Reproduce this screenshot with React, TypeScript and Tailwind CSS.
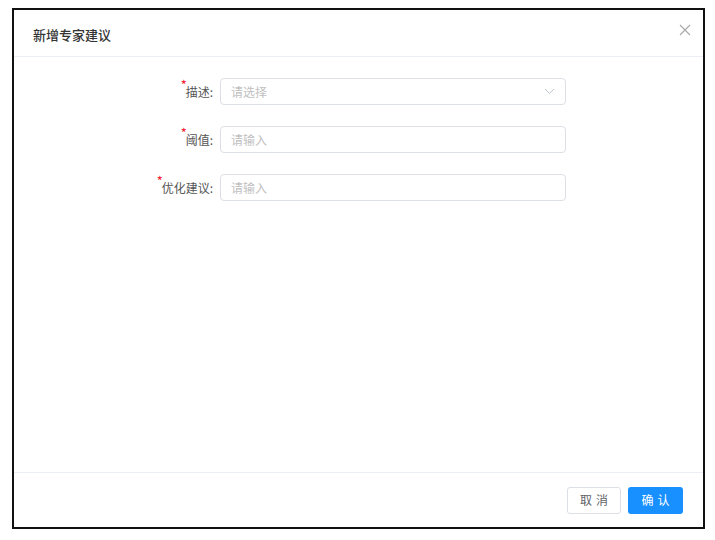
import React from 'react';

const Field: React.FC<{ label: string; placeholder: string; select?: boolean }> = ({ label, placeholder, select }) => (
  <div className="flex items-center h-[27px]">
    <div className="w-[206px] shrink-0 text-right pr-[7px] text-[12px] text-[#555] leading-none">
      <span className="relative">
        <span className="absolute -left-[5px] -top-[5px] text-[13px] text-[#f5222d]">*</span>
        {label}:
      </span>
    </div>
    <div className="w-[346px] h-[27px] border border-[#dcdfe6] rounded-[4px] flex items-center justify-between pl-[10px] pr-[10px]">
      <span className="text-[12px] text-[#bfbfbf]">{placeholder}</span>
      {select && (
        <svg width="11" height="7" viewBox="0 0 11 7" fill="none">
          <path d="M1 1l4.5 4.5L10 1" stroke="#c0c4cc" strokeWidth="1" />
        </svg>
      )}
    </div>
  </div>
);

export default function App() {
  return (
    <div className="bg-white min-h-[540px] pt-[8px] pl-[12px]" style={{ fontFamily: '"Noto Sans CJK SC", "Noto Sans", sans-serif' }}>
      <div className="w-[693px] h-[521px] border-2 border-[#111] bg-white flex flex-col">
        {/* Header */}
        <div className="h-[47px] shrink-0 flex items-center justify-between pl-[19px] pr-[12px] border-b border-[#ebeef5]">
          <span className="text-[13px] font-medium text-[#333] mt-[3px]">新增专家建议</span>
          <svg width="12" height="12" viewBox="0 0 12 12" className="mb-[6px]">
            <path d="M1 1l10 10M11 1L1 11" stroke="#a8a8a8" strokeWidth="1.1" />
          </svg>
        </div>

        {/* Body */}
        <div className="flex-1 pt-[21px] flex flex-col gap-[21px]">
          <Field label="描述" placeholder="请选择" select />
          <Field label="阈值" placeholder="请输入" />
          <Field label="优化建议" placeholder="请输入" />
        </div>

        {/* Footer */}
        <div className="h-[55px] shrink-0 border-t border-[#ebeef5] flex items-center justify-end gap-[7px] pr-[20px]">
          <button className="w-[54px] h-[27px] border border-[#dcdfe6] rounded-[3px] bg-white text-[12px] text-[#606266] tracking-[4px] pl-[4px]">
            取消
          </button>
          <button className="w-[55px] h-[27px] rounded-[3px] bg-[#1890ff] text-[12px] text-white tracking-[4px] pl-[4px]">
            确认
          </button>
        </div>
      </div>
    </div>
  );
}
